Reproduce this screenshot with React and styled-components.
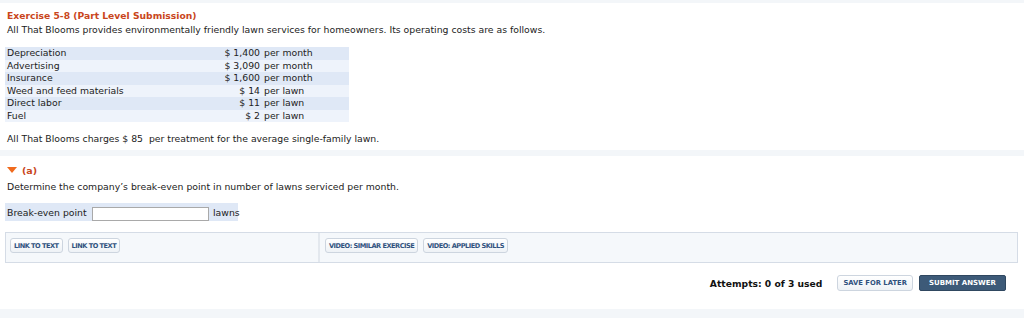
import React from "react";
import styled, { createGlobalStyle } from "styled-components";

const Global = createGlobalStyle`
  html, body { margin: 0; padding: 0; background: #fff; }
  body { font-family: "DejaVu Sans", Verdana, sans-serif; font-size: 9.3px; color: #222; }
`;

const Page = styled.div`
  width: 1024px;
  display: flex;
  flex-direction: column;
`;

const Band = styled.div`
  height: ${(p) => p.$h}px;
  margin-top: ${(p) => p.$mt || 0}px;
  background: #f3f6f9;
`;

const Section = styled.div`
  padding: 0 6px 0 5px;
  display: flex;
  flex-direction: column;
`;

const Title = styled.div`
  margin-top: 6px;
  padding-left: 2px;
  line-height: 14px;
  font-size: 9.2px;
  font-weight: bold;
  color: #c9461c;
`;

const Text = styled.div`
  margin-top: ${(p) => p.$mt || 0}px;
  padding-left: 2px;
  line-height: 14px;
  white-space: nowrap;
`;

const CostTable = styled.table`
  margin-top: 10px;
  width: 344px;
  border-collapse: collapse;
  table-layout: fixed;
`;

const Row = styled.tr`
  height: 12.5px;
  background: ${(p) => (p.$alt ? "#eef3fb" : "#dfe8f6")};
`;

const Cell = styled.td`
  padding: 0 2px;
  line-height: 12.5px;
  text-align: ${(p) => p.$align || "left"};
  white-space: nowrap;
  overflow: hidden;
`;

const PartHead = styled.div`
  margin-top: 7px;
  padding-left: 2px;
  height: 14px;
  display: flex;
  align-items: center;
  gap: 5px;
  color: #c9461c;
  font-weight: bold;
  font-size: 9.5px;
`;

const Tri = styled.span`
  width: 0;
  height: 0;
  border-left: 5px solid transparent;
  border-right: 5px solid transparent;
  border-top: 6px solid #f06a1d;
`;

const AnswerRow = styled.div`
  margin-top: 9px;
  width: 233px;
  height: 18px;
  background: #dfe8f6;
  display: flex;
  align-items: center;
  padding-left: 2px;
  box-sizing: border-box;
  white-space: nowrap;
`;

const AnswerLabel = styled.span`
  width: 85px;
  flex: none;
`;

const Input = styled.input`
  margin: 3px 4px 0 0;
  width: 117px;
  height: 14px;
  box-sizing: border-box;
  border: 1px solid #a9a9a9;
  background: #fff;
  padding: 0;
`;

const Tools = styled.div`
  margin-top: 11px;
  height: 31px;
  box-sizing: border-box;
  border: 1px solid #d5dce6;
  background: #f5f8fb;
  display: flex;
`;

const ToolCell = styled.div`
  display: flex;
  gap: 5px;
  padding: 5px 4px 5px ${(p) => (p.$divider ? 4 : 5)}px;
  box-sizing: border-box;
  width: ${(p) => p.$w || "auto"};
  flex: ${(p) => (p.$w ? "none" : "1")};
  border-right: ${(p) => (p.$divider ? "2px solid #e3e8ee" : "none")};
  align-items: flex-start;
`;

const SmallBtn = styled.button`
  height: 15px;
  padding: 0 3px;
  border: 1px solid #cdd5df;
  border-radius: 3px;
  background: linear-gradient(#ffffff, #eef2f6);
  color: #30527e;
  font-family: "DejaVu Sans", Verdana, sans-serif;
  font-size: 6.6px;
  letter-spacing: -0.5px;
  font-weight: bold;
  text-transform: uppercase;
  white-space: nowrap;
  cursor: pointer;
`;

const Actions = styled.div`
  margin-top: 12px;
  padding-right: 18px;
  display: flex;
  justify-content: flex-end;
  align-items: center;
  height: 16px;
`;

const Attempts = styled.span`
  font-weight: bold;
  font-size: 9.2px;
  color: #111;
  margin-right: 15px;
`;

const SaveBtn = styled(SmallBtn)`
  height: 16px;
  padding: 0 5px;
  font-size: 6.8px;
  letter-spacing: 0;
  margin-right: 6px;
`;

const SubmitBtn = styled.button`
  height: 16px;
  padding: 0 9px;
  border: 1px solid #2f4760;
  border-radius: 2px;
  background: #3d5a78;
  color: #fff;
  font-family: "DejaVu Sans", Verdana, sans-serif;
  font-size: 7px;
  font-weight: bold;
  white-space: nowrap;
`;

const costs = [
  ["Depreciation", "$ 1,400", "per month"],
  ["Advertising", "$ 3,090", "per month"],
  ["Insurance", "$ 1,600", "per month"],
  ["Weed and feed materials", "$ 14", "per lawn"],
  ["Direct labor", "$ 11", "per lawn"],
  ["Fuel", "$ 2", "per lawn"],
];

export default function App() {
  return (
    <Page>
      <Global />
      <Band $h={3} />
      <Section>
        <Title>Exercise 5-8 (Part Level Submission)</Title>
        <Text>
          All That Blooms provides environmentally friendly lawn services for homeowners. Its
          operating costs are as follows.
        </Text>
        <CostTable>
          <colgroup>
            <col style={{ width: 211 }} />
            <col style={{ width: 46 }} />
            <col style={{ width: 87 }} />
          </colgroup>
          <tbody>
            {costs.map((c, i) => (
              <Row key={c[0]} $alt={i % 2 === 1}>
                <Cell>{c[0]}</Cell>
                <Cell $align="right">{c[1]}</Cell>
                <Cell>{c[2]}</Cell>
              </Row>
            ))}
          </tbody>
        </CostTable>
        <Text $mt={10}>
          All That Blooms charges $ 85&nbsp; per treatment for the average single-family lawn.
        </Text>
      </Section>
      <Band $h={6} $mt={4} />
      <Section>
        <PartHead>
          <Tri />
          (a)
        </PartHead>
        <Text $mt={3}>
          Determine the company’s break-even point in number of lawns serviced per month.
        </Text>
        <AnswerRow>
          <AnswerLabel>Break-even point</AnswerLabel>
          <Input type="text" />
          lawns
        </AnswerRow>
        <Tools>
          <ToolCell $w="314px" $divider>
            <SmallBtn>Link to text</SmallBtn>
            <SmallBtn>Link to text</SmallBtn>
          </ToolCell>
          <ToolCell>
            <SmallBtn>Video: Similar Exercise</SmallBtn>
            <SmallBtn>Video: Applied Skills</SmallBtn>
          </ToolCell>
        </Tools>
      </Section>
      <Actions>
        <Attempts>Attempts: 0 of 3 used</Attempts>
        <SaveBtn>Save for later</SaveBtn>
        <SubmitBtn>SUBMIT ANSWER</SubmitBtn>
      </Actions>
      <Band $h={10} $mt={18} />
    </Page>
  );
}
